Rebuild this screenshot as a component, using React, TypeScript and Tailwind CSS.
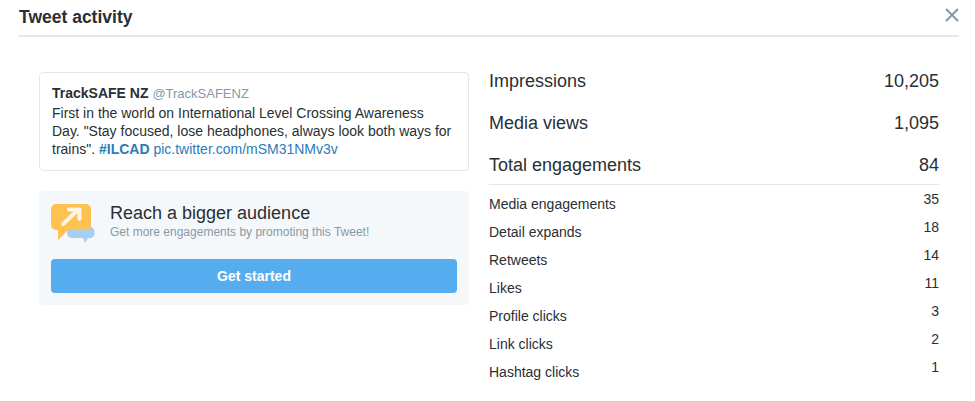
const big = [
  ["Impressions", "10,205"],
  ["Media views", "1,095"],
  ["Total engagements", "84"],
];
const small = [
  ["Media engagements", "35"],
  ["Detail expands", "18"],
  ["Retweets", "14"],
  ["Likes", "11"],
  ["Profile clicks", "3"],
  ["Link clicks", "2"],
  ["Hashtag clicks", "1"],
];

function PromoIcon() {
  return (
    <svg width="44" height="40" viewBox="0 0 44 40" className="shrink-0 block">
      <path d="M21 23h18a4.500 4.500 0 0 1 4.500 4.500v2a4.500 4.500 0 0 1-4.500 4.500h-2l-3 5-2-5H21a5 5 0 0 1-5-5v-1a5 5 0 0 1 5-5z" fill="#a6cff2" />
      <path d="M5 0h30a5 5 0 0 1 5 5v16a5 5 0 0 1-5 5H17L7 36V26H5a5 5 0 0 1-5-5V5a5 5 0 0 1 5-5z" fill="#ffc14f" />
      <path d="M12 20 27 6M18 5.500h10.500V15" fill="none" stroke="#fff5e2" strokeWidth="4" strokeLinecap="round" strokeLinejoin="round" />
    </svg>
  );
}

export default function App() {
  return (
    <div className="w-[975px] h-[401px] bg-white overflow-hidden font-['Liberation_Sans',Arial,sans-serif] text-[#292f33]">
      <header className="ml-[18px] mr-[16px] h-[37px] border-b-2 border-[#e6e9ec] flex items-start justify-between">
        <h1 className="ml-px mt-[6px] text-[17.500px] leading-[22px] font-bold text-[#292f33]">Tweet activity</h1>
        <svg width="14" height="14" viewBox="0 0 14 14" className="mt-[8px]">
          <path d="M1 1l12 12M13 1 1 13" stroke="#8899a6" strokeWidth="2" fill="none" />
        </svg>
      </header>
      <main className="flex pl-[39px] pr-[36px] pt-[35px] gap-[20px]">
        <section className="w-[430px] shrink-0">
          <article className="h-[99px] border border-[#e1e8ed] rounded-[4px] pl-[12px] pr-[15px] pt-[11px] text-[14px] leading-[18px]">
            <div className="leading-[19px]">
              <span className="font-bold text-[#292f33] text-[14px]">TrackSAFE NZ</span>{" "}
              <span className="text-[#8899a6] text-[13px]">@TrackSAFENZ</span>
            </div>
            <p className="mt-px text-[#292f33]">
              First in the world on International Level Crossing Awareness Day. "Stay focused, lose headphones, always look both ways for trains". <a className="font-bold text-[#2b7bb9]">#ILCAD</a>{" "}
              <a className="text-[#2b7bb9]">pic.twitter.com/mSM31NMv3v</a>
            </p>
          </article>
          <div className="mt-[20px] h-[114px] bg-[#f5f8fa] rounded-[3px] px-[12px] pt-[13px]">
            <div className="flex h-[41px] gap-[15px]">
              <PromoIcon />
              <div>
                <div className="text-[18px] leading-[18px] text-[#292f33]">Reach a bigger audience</div>
                <div className="text-[12px] leading-[14px] mt-[3px] text-[#8899a6]">Get more engagements by promoting this Tweet!</div>
              </div>
            </div>
            <button className="mt-[14px] block w-full h-[34px] rounded-[4px] bg-[#55acee] text-white text-[14px] font-bold">Get started</button>
          </div>
        </section>
        <section className="flex-1 -mt-px">
          <div className="border-b border-[#e1e8ed] h-[114px]">
            {big.map(([l, v]) => (
              <div key={l} className="flex justify-between h-[42px] text-[18px] leading-[20px] text-[#292f33]">
                <span>{l}</span>
                <span>{v}</span>
              </div>
            ))}
          </div>
          <ul className="pt-[3px]">
            {small.map(([l, v]) => (
              <li key={l} className="flex justify-between h-[28px] text-[14px] text-[#292f33]">
                <span className="leading-[20px] pt-[6px]">{l}</span>
                <span className="leading-[20px] pt-[1px]">{v}</span>
              </li>
            ))}
          </ul>
        </section>
      </main>
    </div>
  );
}
